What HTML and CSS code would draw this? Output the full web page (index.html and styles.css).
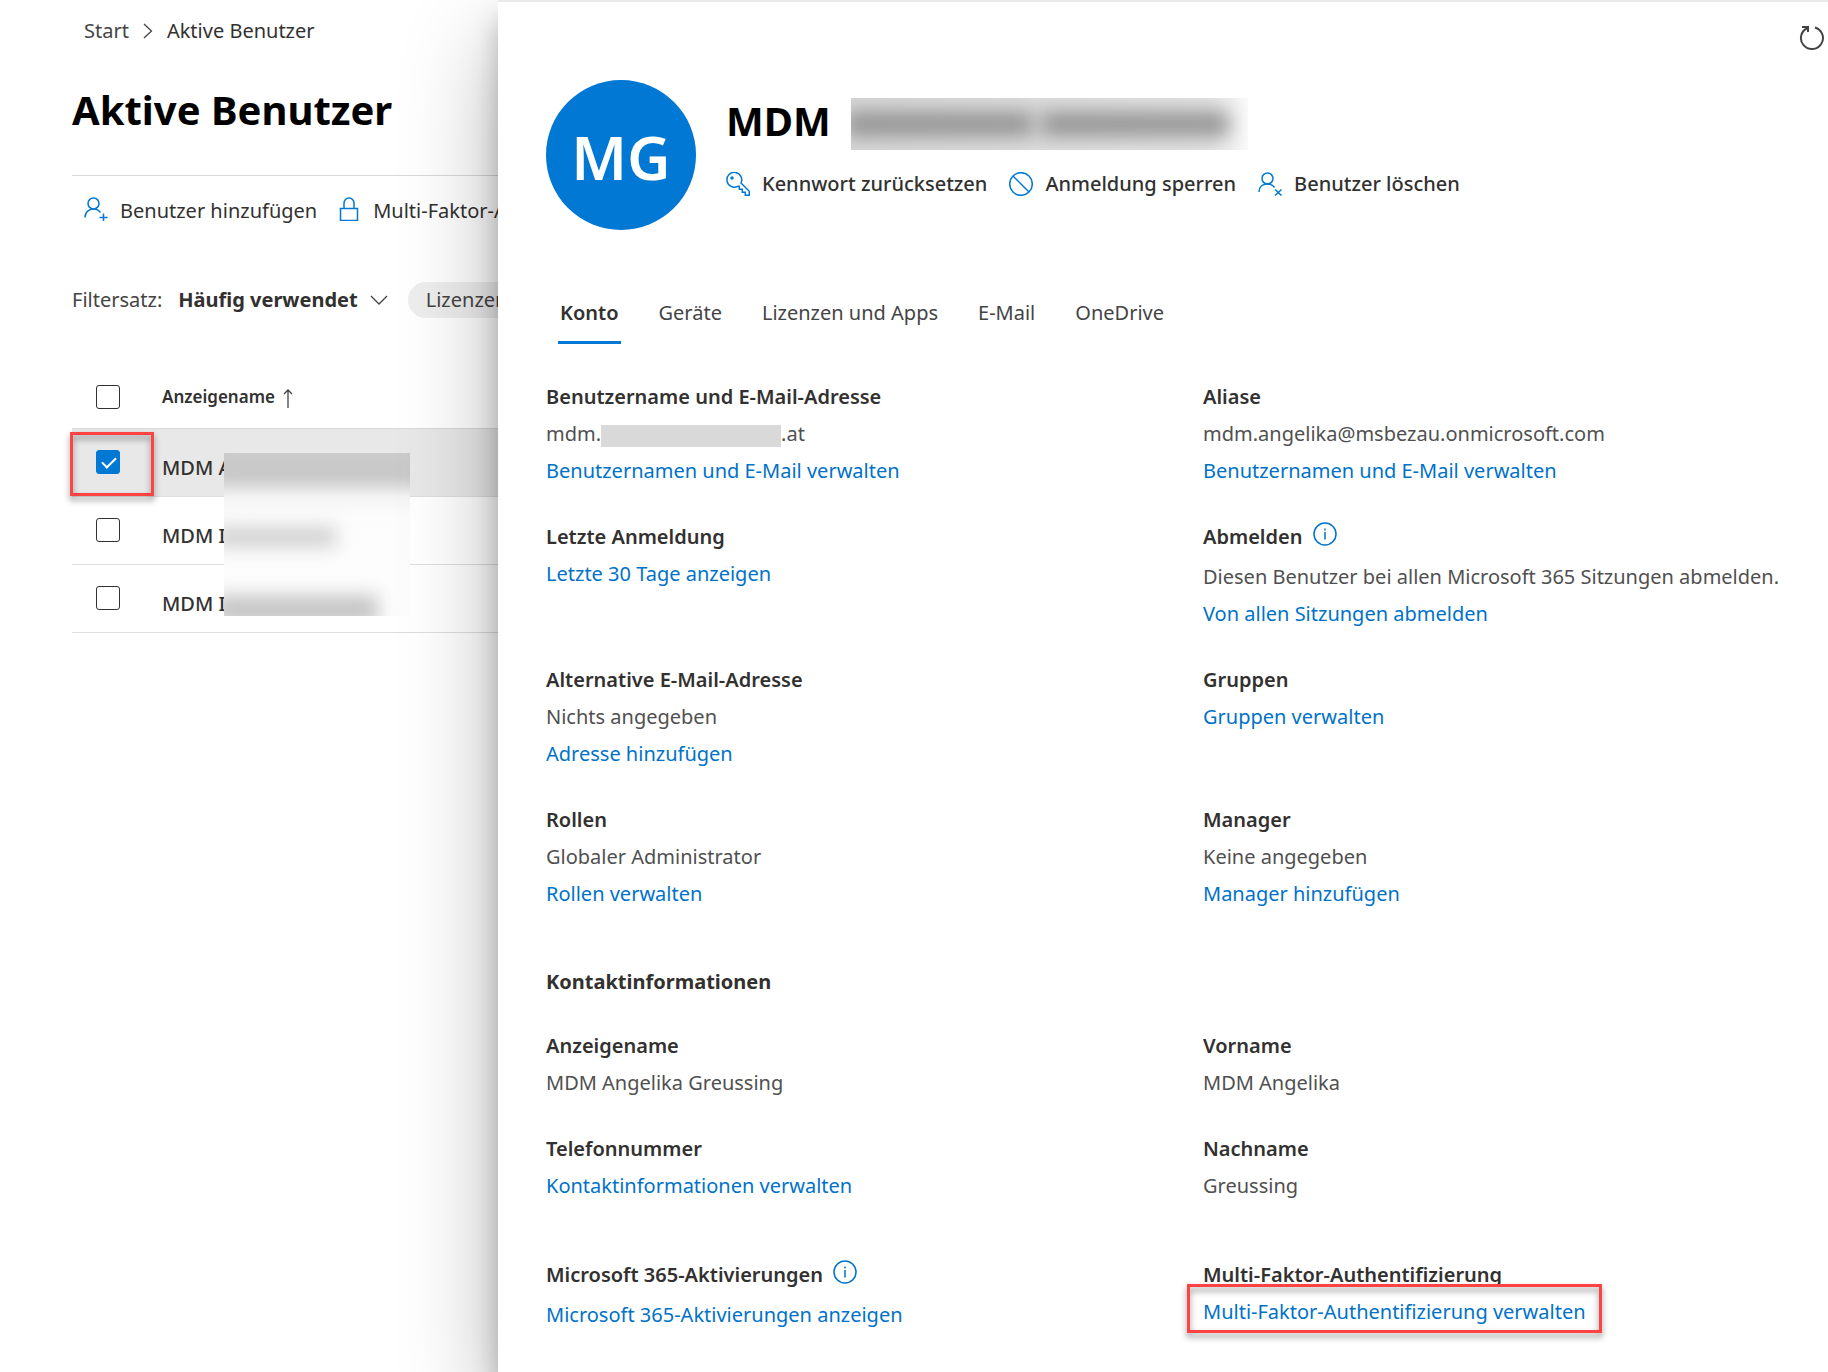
FILE: index.html
```html
<!DOCTYPE html>
<html lang="de">
<head>
    <meta charset="UTF-8">
    <meta name="viewport" content="width=device-width, initial-scale=1.0">
    <title>Aktive Benutzer</title>
    <link rel="stylesheet" href="styles.css">
</head>
<body>
    <main class="users">
        <nav class="breadcrumb">
            <a href="#">Start</a>
            <svg width="10" height="16" viewBox="0 0 10 16"><path d="M1 1l7.500 7L1 15"/></svg>
            <a href="#" class="current">Aktive Benutzer</a>
        </nav>

        <h1>Aktive Benutzer</h1>

        <div class="toolbar">
            <button type="button">
                <svg class="icon" viewBox="0 0 24 24"><circle cx="9.500" cy="6.500" r="5.500"/><path d="M1 20.500c0-5 3.500-8.500 8.500-8.500 3 0 5.500 1.500 7 3.500M19.500 16.500v8M15.500 20.500h8"/></svg>
                Benutzer hinzufügen
            </button>
            <button type="button">
                <svg class="icon" viewBox="0 0 24 24"><path d="M3.500 11.500h17v12h-17zM7 11.500V6a5 5 0 0 1 10 0v5.500"/></svg>
                Multi-Faktor-Authentifizierung
            </button>
        </div>

        <div class="filters">
            <span>Filtersatz:</span>
            <button type="button" class="filter-set">
                Häufig verwendet
                <svg width="18" height="10" viewBox="0 0 18 10"><path d="M1 1l8 8 8-8"/></svg>
            </button>
            <button type="button" class="chip">Lizenzen</button>
        </div>

        <div class="list">
            <table>
                <thead>
                    <tr>
                        <th class="check"><input type="checkbox" aria-label="Alle auswählen"></th>
                        <th>
                            Anzeigename
                            <svg width="10" height="19" viewBox="0 0 10 19"><path d="M5 19V1M1 5l4-4 4 4"/></svg>
                        </th>
                    </tr>
                </thead>
                <tbody>
                    <tr class="selected">
                        <td class="check marked"><input type="checkbox" aria-label="Benutzer 1" checked></td>
                        <td>MDM A</td>
                    </tr>
                    <tr>
                        <td class="check"><input type="checkbox" aria-label="Benutzer 2"></td>
                        <td>MDM I</td>
                    </tr>
                    <tr>
                        <td class="check"><input type="checkbox" aria-label="Benutzer 3"></td>
                        <td>MDM I</td>
                    </tr>
                </tbody>
            </table>
            <div class="names-hidden">
                <i class="smudge first"></i>
                <i class="smudge second"></i>
                <i class="smudge third"></i>
            </div>
        </div>
    </main>

    <section class="panel">
        <button type="button" class="refresh" aria-label="Aktualisieren">
            <svg width="26" height="26" viewBox="0 0 26 26"><path d="M16 2.500A11 11 0 1 1 8.500 3M3 2h6v5"/></svg>
        </button>

        <header class="profile">
            <div class="avatar">MG</div>
            <div class="profile-info">
                <h2>MDM <span class="name-hidden"><i class="blob"></i><i class="blob"></i></span></h2>
                <div class="actions">
                    <button type="button">
                        <svg class="icon" viewBox="0 0 24 24"><circle cx="6" cy="6" r="1"/><path d="M15 11l8.300 8.300v4h-4v-3h-3v-3h-3v-3h-1.500A7.400 7.400 0 1 1 15 11z"/></svg>
                        Kennwort zurücksetzen
                    </button>
                    <button type="button">
                        <svg class="icon" viewBox="0 0 24 24"><circle cx="12" cy="12" r="11.300"/><path d="M4 4l16 16"/></svg>
                        Anmeldung sperren
                    </button>
                    <button type="button">
                        <svg class="icon" viewBox="0 0 24 24"><circle cx="9.500" cy="6.500" r="5.500"/><path d="M1 20c0-5 3.500-8 8.500-8 3 0 5.500 1.500 7 3.500M17 17.500l6.500 6M23.500 17.500l-6.500 6"/></svg>
                        Benutzer löschen
                    </button>
                </div>
            </div>
        </header>

        <nav class="tabs">
            <a href="#" class="active">Konto</a>
            <a href="#">Geräte</a>
            <a href="#">Lizenzen und Apps</a>
            <a href="#">E-Mail</a>
            <a href="#">OneDrive</a>
        </nav>

        <div class="details">
            <div>
                <h3>Benutzername und E-Mail-Adresse</h3>
                <p>mdm.<span class="mail-hidden"></span>.at</p>
                <a href="#">Benutzernamen und E-Mail verwalten</a>
            </div>
            <div>
                <h3>Aliase</h3>
                <p>mdm.angelika@msbezau.onmicrosoft.com</p>
                <a href="#">Benutzernamen und E-Mail verwalten</a>
            </div>
            <div>
                <h3>Letzte Anmeldung</h3>
                <a href="#">Letzte 30 Tage anzeigen</a>
            </div>
            <div>
                <h3 class="with-info">Abmelden
                    <svg class="info" viewBox="0 0 24 24"><circle cx="12" cy="12" r="11"/><path d="M12 10v7.500M12 6.500v2"/></svg>
                </h3>
                <p>Diesen Benutzer bei allen Microsoft 365 Sitzungen abmelden.</p>
                <a href="#">Von allen Sitzungen abmelden</a>
            </div>
            <div>
                <h3>Alternative E-Mail-Adresse</h3>
                <p>Nichts angegeben</p>
                <a href="#">Adresse hinzufügen</a>
            </div>
            <div>
                <h3>Gruppen</h3>
                <a href="#">Gruppen verwalten</a>
            </div>
            <div>
                <h3>Rollen</h3>
                <p>Globaler Administrator</p>
                <a href="#">Rollen verwalten</a>
            </div>
            <div>
                <h3>Manager</h3>
                <p>Keine angegeben</p>
                <a href="#">Manager hinzufügen</a>
            </div>
        </div>

        <h2 class="section-title">Kontaktinformationen</h2>

        <div class="details">
            <div>
                <h3>Anzeigename</h3>
                <p>MDM Angelika Greussing</p>
            </div>
            <div>
                <h3>Vorname</h3>
                <p>MDM Angelika</p>
            </div>
            <div>
                <h3>Telefonnummer</h3>
                <a href="#">Kontaktinformationen verwalten</a>
            </div>
            <div>
                <h3>Nachname</h3>
                <p>Greussing</p>
            </div>
        </div>

        <div class="details security">
            <div>
                <h3 class="with-info">Microsoft 365-Aktivierungen
                    <svg class="info" viewBox="0 0 24 24"><circle cx="12" cy="12" r="11"/><path d="M12 10v7.500M12 6.500v2"/></svg>
                </h3>
                <a href="#">Microsoft 365-Aktivierungen anzeigen</a>
            </div>
            <div>
                <h3>Multi-Faktor-Authentifizierung</h3>
                <a href="#" class="marked">Multi-Faktor-Authentifizierung verwalten</a>
            </div>
        </div>
    </section>
</body>
</html>
```

FILE: styles.css
```css
* {
    box-sizing: border-box;
}

body {
    margin: 0;
    min-height: 100vh;
    display: grid;
    grid-template-columns: 498px 1fr;
    font-family: "Noto Sans", "Open Sans", sans-serif;
    font-size: 20px;
    line-height: 37px;
    color: #323130;
    background: #fff;
}

h1, h2, h3, p {
    margin: 0;
}

a {
    text-decoration: none;
    color: #0072c9;
}

button {
    padding: 0;
    border: 0;
    background: none;
    font: inherit;
    color: inherit;
    white-space: nowrap;
    display: flex;
    align-items: center;
    gap: 12px;
    cursor: pointer;
}

svg {
    fill: none;
    stroke: #444;
    stroke-width: 1.3;
    flex-shrink: 0;
}

.icon {
    width: 24px;
    height: 24px;
    stroke: #0078d4;
    stroke-width: 1.5;
}

/* user list */
.users {
    padding: 12px 0 0 72px;
    overflow: hidden;
}

.breadcrumb {
    display: flex;
    align-items: center;
    gap: 14px;
    padding-left: 12px;

    a {
        color: #444;
    }

    .current {
        color: #323130;
    }
}

h1, .profile h2 {
    font-size: 40px;
    line-height: 52px;
    font-weight: 700;
    color: #000;
}

h1 {
    margin-top: 35px;
}

.toolbar {
    margin-top: 39px;
    padding: 16px 12px 14px;
    border-top: 1px solid #d8d8d8;
    display: flex;
    gap: 20px;

    .icon {
        margin-bottom: 4px;
    }
}

.filters {
    margin-top: 38px;
    display: flex;
    align-items: center;
    gap: 16px;
    color: #444;

    .filter-set {
        font-weight: 700;
        color: #323130;
    }

    .chip {
        height: 36px;
        padding: 0 18px;
        margin-left: 4px;
        border-radius: 18px;
        background: #eee;
    }
}

.list {
    position: relative;
    margin-top: 47px;
}

table {
    width: 100%;
    border-collapse: separate;
    border-spacing: 0;
    text-align: left;
}

th {
    height: 64px;
    padding: 0;
    font-size: 17px;
    font-weight: 600;
    border-bottom: 1px solid #d8d8d8;

    svg {
        margin-left: 4px;
        vertical-align: middle;
    }
}

td {
    height: 68px;
    padding: 10px 0 0;
    font-weight: 500;
    border-bottom: 1px solid #dedede;
}

.check {
    width: 90px;
    padding: 0 0 0 24px;
}

td.check {
    padding-bottom: 2px;
}

.selected td {
    background: #e8e8e8;
}

input[type="checkbox"] {
    appearance: none;
    display: block;
    width: 24px;
    height: 24px;
    margin: 0;
    border: 1px solid #323130;
    border-radius: 3px;
    background: #fff;

    &:checked {
        border-color: #0078d4;
        background: #0078d4;
    }

    &:checked::after {
        content: "";
        display: block;
        width: 12px;
        height: 6px;
        margin: 6px 5px;
        border: solid #fff;
        border-width: 0 0 2px 2px;
        transform: rotate(-45deg);
    }
}

/* red frames round the things to click */
.marked {
    position: relative;

    &::before {
        content: "";
        position: absolute;
        inset: -14px -16px -8px;
        border: 3px solid #ff4343;
        filter: drop-shadow(0 4px 3px rgba(0, 0, 0, .45));
        pointer-events: none;
    }
}

td.marked::before {
    inset: 3px 8px 0 -2px;
}

/* hidden names */
.names-hidden {
    position: absolute;
    left: 152px;
    top: 88px;
    width: 186px;
    height: 163px;
    overflow: hidden;
    background: linear-gradient(#cecece 0, #d0d0d0 22px, #f4f4f4 44px, #fcfcfc 64px, #fdfdfd 100%);
}

.smudge {
    position: absolute;
    left: -10px;
    height: 20px;
    background: #c6c6c6;
    filter: blur(9px);
}

.first {
    top: 6px;
    width: 210px;
}

.second {
    top: 74px;
    width: 122px;
    background: #d0d0d0;
}

.third {
    top: 142px;
    width: 164px;
    height: 30px;
}

.name-hidden {
    display: flex;
    gap: 14px;
    width: 397px;
    height: 52px;
    overflow: hidden;
    background: linear-gradient(90deg, #d8d8d8, #e4e4e4 90%, #fafafa);
}

.blob {
    width: 188px;
    height: 24px;
    margin: 14px 0 0 -6px;
    background: #909090;
    filter: blur(10px);
}

.mail-hidden {
    display: inline-block;
    width: 180px;
    height: 22px;
    vertical-align: -6px;
    background: #d9d9d9;
}

/* detail panel */
.panel {
    position: relative;
    padding: 78px 0 34px 48px;
    border-top: 2px solid #eaeaea;
    background: #fff;
    box-shadow: 0 40px 90px rgba(0, 0, 0, .3), 0 20px 24px rgba(0, 0, 0, .22);
}

.refresh {
    position: absolute;
    top: 23px;
    right: 3px;

    svg {
        stroke-width: 2;
    }
}

.profile {
    display: flex;
    gap: 30px;

    h2 {
        display: flex;
        gap: 20px;
        height: 52px;
        line-height: 46px;
    }
}

.avatar {
    width: 150px;
    height: 150px;
    flex-shrink: 0;
    border-radius: 50%;
    background: #0078d4;
    color: #fff;
    font-size: 60px;
    font-weight: 600;
    line-height: 154px;
    text-align: center;
}

.profile-info {
    padding-top: 18px;
}

.actions {
    margin-top: 15px;
    display: flex;
    gap: 22px;
    font-weight: 500;
}

.tabs {
    margin: 64px 0 34px 12px;
    display: flex;
    gap: 36px;

    a {
        padding: 0 2px 10px;
        color: #444;
        border-bottom: 3px solid transparent;
    }

    .active {
        font-weight: 600;
        color: #323130;
        border-color: #0078d4;
    }
}

.details {
    display: grid;
    grid-template-columns: 1fr 1fr;
    gap: 29px 32px;

    h3 {
        font-size: 20px;
        font-weight: 600;
    }

    p {
        color: #505050;
    }

    .with-info {
        display: flex;
        gap: 10px;
        padding-bottom: 3px;
    }
}

.info {
    width: 24px;
    height: 24px;
    margin-top: 4px;
    stroke: #0072c9;
    stroke-width: 1.5;
}

.section-title {
    margin: 51px 0 27px;
    font-size: 20px;
    font-weight: 700;
}

.security {
    margin-top: 52px;
}
```
